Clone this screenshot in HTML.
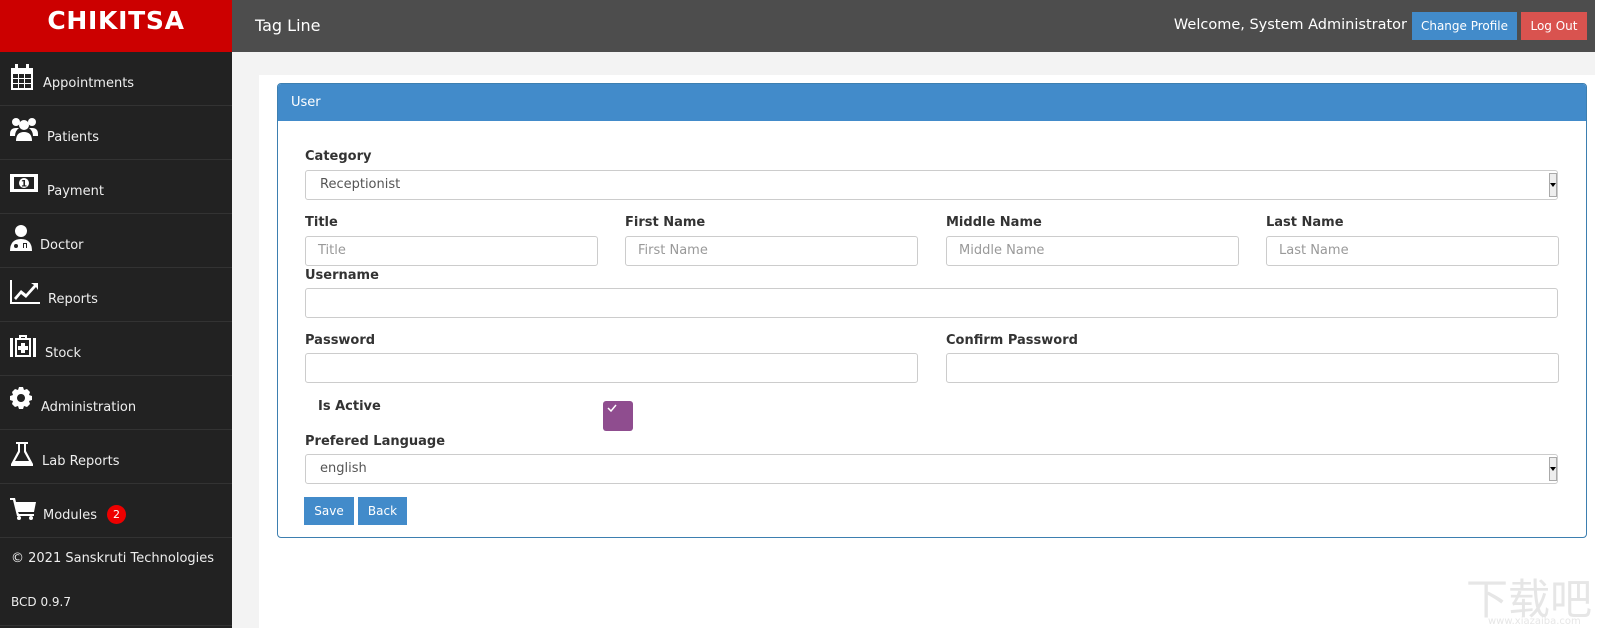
<!DOCTYPE html>
<html><head><meta charset="utf-8"><style>
*{box-sizing:border-box;margin:0;padding:0}
body{width:1600px;height:633px;background:#fff;font-family:"DejaVu Sans","Liberation Sans",sans-serif;position:relative;overflow:hidden;color:#333}
.a{position:absolute}
#logo{left:0;top:0;width:232px;height:52px;background:#cc0000;color:#fff;font-weight:bold;font-size:25px;text-align:center;line-height:42px;letter-spacing:0.7px}
#top{left:232px;top:0;width:1363px;height:52px;background:#4d4d4d}
#side{left:0;top:52px;width:232px;height:576px;background:#222}
.it{position:absolute;left:0;width:232px;height:54px;border-bottom:1px solid #333;color:#eee;font-size:13px}
.it svg{position:absolute;fill:#fff}
.it span{position:absolute;top:5px;line-height:54px}
#grey{left:232px;top:52px;width:1363px;height:576px;background:#f3f3f3}
#white{left:259px;top:75px;width:1336px;height:553px;background:#fff}
#panel{left:277px;top:83px;width:1310px;height:455px;border:1px solid #3d7fb0;border-radius:4px;overflow:hidden}
#ph{left:0;top:0;width:100%;height:37px;background:#428bca;color:#fff;font-size:13px;line-height:37px;padding-left:13px}
.lb{position:absolute;font-weight:bold;font-size:13px;color:#333}
.in{position:absolute;height:30px;border:1px solid #ccc;border-radius:3px;font-size:13px;line-height:28px;padding-left:12px;color:#999;background:#fff}
.sel{color:#555;padding-left:14px}
.btn{position:absolute;color:#fff;font-size:12px;text-align:center}
</style></head><body>
<div class="a" id="logo">CHIKITSA</div>
<div class="a" id="top">
<div class="a" style="left:23px;top:0;line-height:52px;color:#fff;font-size:16px">Tag Line</div>
<div class="a" style="right:188px;top:0;line-height:50px;color:#fff;font-size:14.5px">Welcome, System Administrator</div>
<div class="btn" style="left:1180px;top:12px;width:105px;height:28px;line-height:28px;background:#428bca">Change Profile</div>
<div class="btn" style="left:1289px;top:12px;width:66px;height:28px;line-height:28px;background:#d9534f">Log Out</div>
</div>
<div class="a" id="side">
<div class="it" style="top:0"><svg style="left:10px;top:12px" width="24" height="26" viewBox="0 0 24 26"><path d="M1 4h22v22H1z M3 10v14h18V10z" fill-rule="evenodd"/><path d="M5 0h3v6H5zM16 0h3v6h-3z"/><path d="M3 14h18v1H3zM3 19h18v1H3zM8 10h1v14H8zM14 10h1v14h-1z" fill="#fff"/></svg><span style="left:43px">Appointments</span></div>
<div class="it" style="top:54px"><svg style="left:10px;top:11px" width="28" height="26" viewBox="0 0 28 26"><circle cx="6" cy="5" r="4"/><circle cx="22" cy="5" r="4"/><circle cx="14" cy="8" r="5"/><path d="M0 17q0-6 6-6h3q-4 3-4 8H0zM28 17q0-6-6-6h-3q4 3 4 8h5zM6 24q0-9 8-9t8 9z"/></svg><span style="left:47px">Patients</span></div>
<div class="it" style="top:108px"><svg style="left:10px;top:14px" width="28" height="18" viewBox="0 0 28 18"><path d="M0 0h28v18H0z M4 3v12h20V3z" fill-rule="evenodd"/><circle cx="14" cy="9" r="5"/><text x="14" y="12.5" font-size="9" text-anchor="middle" fill="#222" font-weight="bold">1</text></svg><span style="left:47px">Payment</span></div>
<div class="it" style="top:162px"><svg style="left:10px;top:11px" width="22" height="26" viewBox="0 0 22 26"><circle cx="11" cy="6" r="6"/><path d="M0 26q0-12 11-12t11 12z"/><circle cx="6" cy="21" r="2" fill="#222"/><path d="M13 18h4v5h-1v-4h-2v4h-1z" fill="#222"/></svg><span style="left:40px">Doctor</span></div>
<div class="it" style="top:216px"><svg style="left:10px;top:12px" width="30" height="24" viewBox="0 0 30 24"><path d="M0 0h2v22h28v2H0z"/><path d="M4 18l7-8 5 4 8-9-3-2h7v7l-2-3-10 11-5-4-5 6z"/></svg><span style="left:48px">Reports</span></div>
<div class="it" style="top:270px"><svg style="left:10px;top:13px" width="26" height="22" viewBox="0 0 26 22"><path d="M0 3h3v19H0zM23 3h3v19h-3zM9 0h8v4h-2V2h-4v2H9z"/><path d="M5 3h16v19H5z M7 5v15h12V5z" fill-rule="evenodd"/><path d="M11 8h4v3h3v4h-3v3h-4v-3H8v-4h3z"/></svg><span style="left:45px">Stock</span></div>
<div class="it" style="top:324px"><svg style="left:10px;top:11px" width="22" height="22" viewBox="0 0 22 22"><path d="M9 0h4l1 3 3-1 3 3-1 3 3 1v4l-3 1 1 3-3 3-3-1-1 3H9l-1-3-3 1-3-3 1-3-3-1V9l3-1-1-3 3-3 3 1z M11 7a4 4 0 1 0 .01 0z" fill-rule="evenodd"/></svg><span style="left:41px">Administration</span></div>
<div class="it" style="top:378px"><svg style="left:11px;top:12px" width="22" height="24" viewBox="0 0 22 24"><path d="M5 0h12v2h-2v7l7 13v2H0v-2L7 9V2H5z M9 2v8L4 19h14l-5-9V2z" fill-rule="evenodd"/><path d="M4 19h14l3 4H1z"/></svg><span style="left:42px">Lab Reports</span></div>
<div class="it" style="top:432px"><svg style="left:10px;top:14px" width="26" height="22" viewBox="0 0 26 22"><path d="M0 0h5l1 4h20l-2 10H8l1 2h15v2H7L3 2H0z"/><circle cx="9" cy="20" r="2"/><circle cx="21" cy="20" r="2"/></svg><span style="left:43px">Modules</span><div class="a" style="left:107px;top:21px;width:19px;height:19px;border-radius:50%;background:#e00;color:#fff;font-size:11px;text-align:center;line-height:19px">2</div></div>
<div class="a" style="left:11px;top:493px;color:#eee;font-size:13px;line-height:28px">© 2021 Sanskruti Technologies</div>
<div class="a" style="left:11px;top:536px;color:#eee;font-size:12px;line-height:28px">BCD 0.9.7</div>
<div class="a" style="left:0;top:573px;width:232px;height:1px;background:#333"></div>
</div>
<div class="a" id="grey"></div>
<div class="a" id="white"></div>
<div class="a" id="panel"><div class="a" id="ph">User</div></div>
<div class="lb" style="left:305px;top:149px">Category</div>
<div class="in sel" style="left:305px;top:170px;width:1253px">Receptionist<div class="a" style="right:0;top:2px;width:8px;height:24px;border:1px solid #aaa;background:#eee"></div><div class="a" style="right:1px;top:12px;border-left:3px solid transparent;border-right:3px solid transparent;border-top:4px solid #000"></div></div>
<div class="lb" style="left:305px;top:215px">Title</div>
<div class="lb" style="left:625px;top:215px">First Name</div>
<div class="lb" style="left:946px;top:215px">Middle Name</div>
<div class="lb" style="left:1266px;top:215px">Last Name</div>
<div class="in" style="left:305px;top:236px;width:293px">Title</div>
<div class="in" style="left:625px;top:236px;width:293px">First Name</div>
<div class="in" style="left:946px;top:236px;width:293px">Middle Name</div>
<div class="in" style="left:1266px;top:236px;width:293px">Last Name</div>
<div class="lb" style="left:305px;top:268px">Username</div>
<div class="in" style="left:305px;top:288px;width:1253px"></div>
<div class="lb" style="left:305px;top:333px">Password</div>
<div class="lb" style="left:946px;top:333px">Confirm Password</div>
<div class="in" style="left:305px;top:353px;width:613px"></div>
<div class="in" style="left:946px;top:353px;width:613px"></div>
<div class="lb" style="left:318px;top:399px">Is Active</div>
<div class="a" style="left:603px;top:401px;width:30px;height:30px;background:#8f4d8f;border-radius:3px"><svg class="a" style="left:4px;top:3px" width="10" height="8" viewBox="0 0 10 8"><path d="M1 4l3 3 5-6" stroke="#fff" stroke-width="1.5" fill="none"/></svg></div>
<div class="lb" style="left:305px;top:434px">Prefered Language</div>
<div class="in sel" style="left:305px;top:454px;width:1253px">english<div class="a" style="right:0;top:2px;width:8px;height:24px;border:1px solid #aaa;background:#eee"></div><div class="a" style="right:1px;top:12px;border-left:3px solid transparent;border-right:3px solid transparent;border-top:4px solid #000"></div></div>
<div class="btn" style="left:304px;top:497px;width:50px;height:28px;line-height:28px;background:#428bca">Save</div>
<div class="btn" style="left:358px;top:497px;width:49px;height:28px;line-height:28px;background:#428bca">Back</div>
<div class="a" style="left:1466px;top:574px;color:#e6e6e6;font-size:42px;font-family:'Noto Sans CJK SC',sans-serif;line-height:46px;white-space:nowrap">下载吧</div>
<div class="a" style="left:1488px;top:616px;color:#e6e6e6;font-size:10px;white-space:nowrap">www.xiazaiba.com</div>
</body></html>
